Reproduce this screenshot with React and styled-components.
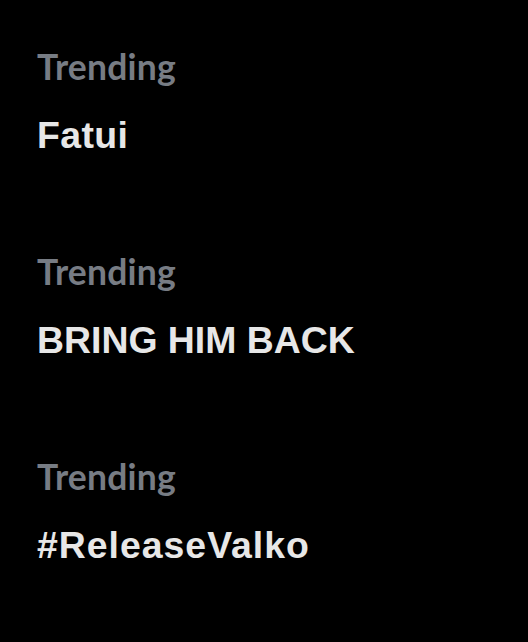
import React from "react";
import styled, { createGlobalStyle } from "styled-components";

const Global = createGlobalStyle`
  html, body { margin: 0; padding: 0; background: #000; }
  #root { min-height: 642px; }
`;

const Page = styled.div`
  width: 528px;
  height: 642px;
  background: #000;
  box-sizing: border-box;
  padding: 47px 0 0 37px;
  display: flex;
  flex-direction: column;
  gap: 95px;
  overflow: hidden;
`;

const Item = styled.div`
  display: flex;
  flex-direction: column;
  gap: 26px;
`;

const Label = styled.div`
  font-family: Lato, "Noto Sans", sans-serif;
  font-weight: 700;
  font-size: 35.5px;
  line-height: 40px;
  letter-spacing: 0.2px;
  color: #777c84;
`;

const Title = styled.div`
  font-family: "Liberation Sans", Arial, sans-serif;
  font-weight: 700;
  font-size: 37.4px;
  line-height: 44px;
  letter-spacing: ${(p) => p.$spacing || 0}px;
  color: #e7e7e7;
`;

const trends = [
  { text: "Fatui", spacing: 0.4 },
  { text: "BRING HIM BACK", spacing: 0 },
  { text: "#ReleaseValko", spacing: 1 },
];

export default function App() {
  return (
    <>
      <Global />
      <Page>
        {trends.map((t) => (
          <Item key={t.text}>
            <Label>Trending</Label>
            <Title $spacing={t.spacing}>{t.text}</Title>
          </Item>
        ))}
      </Page>
    </>
  );
}
